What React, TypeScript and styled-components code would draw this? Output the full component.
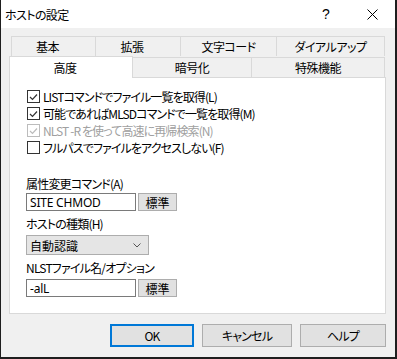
import styled, { createGlobalStyle } from "styled-components";

const GlobalStyle = createGlobalStyle`
  html, body {
    margin: 0;
    padding: 0;
    background: #ffffff;
  }
  * {
    box-sizing: border-box;
  }
  body {
    font-family: "Noto Sans CJK JP", "Noto Sans", sans-serif;
    font-size: 12px;
    font-feature-settings: "palt" 1;
    color: #000;
  }
`;

const Window = styled.div`
  width: 397px;
  height: 359px;
  display: flex;
  flex-direction: column;
  background: #f0f0f0;
  border-left: 1px solid #1e1e1e;
  border-right: 2px solid #1e1e1e;
  border-bottom: 2px solid #1e1e1e;
`;

const TitleBar = styled.div`
  height: 28px;
  flex: none;
  display: flex;
  align-items: center;
  background: #ffffff;
  padding-left: 4px;
`;

const TitleText = styled.div`
  flex: 1;
  font-size: 12px;
  letter-spacing: -0.6px;
`;

const TitleButton = styled.div<{ $w: number }>`
  width: ${(p) => p.$w}px;
  height: 28px;
  display: flex;
  align-items: center;
  justify-content: center;
  font-family: "Liberation Sans", sans-serif;
  font-size: 14px;
`;

const Body = styled.div`
  flex: 1;
  display: flex;
  flex-direction: column;
  padding: 9px 9px 0 8px;
`;

const TabRow = styled.div<{ $indent: number }>`
  display: flex;
  align-items: flex-end;
  padding-left: ${(p) => p.$indent}px;
  height: ${(p) => (p.$indent ? 19 : 21)}px;
`;

const Tab = styled.div<{ $w: number; $shift?: number; $active?: boolean }>`
  width: ${(p) => p.$w}px;
  height: ${(p) => (p.$active ? 22 : 20)}px;
  display: flex;
  align-items: center;
  justify-content: center;
  padding-right: ${(p) => p.$shift || 0}px;
  background: ${(p) => (p.$active ? "#ffffff" : "#f0f0f0")};
  border: 1px solid #d9d9d9;
  border-bottom: none;
  margin-left: -1px;
  position: relative;
  z-index: ${(p) => (p.$active ? 2 : 1)};
  margin-bottom: ${(p) => (p.$active ? -1 : 0)}px;
  letter-spacing: -0.5px;
  &:first-child {
    margin-left: 0;
  }
`;

const Panel = styled.div`
  width: 377px;
  height: 237px;
  background: #ffffff;
  border: 1px solid #d9d9d9;
  display: flex;
  flex-direction: column;
  padding: 10px 0 0 16px;
`;

const CheckRow = styled.label<{ $disabled?: boolean }>`
  height: 17px;
  display: flex;
  align-items: center;
  gap: 3px;
  margin-left: 1px;
  color: ${(p) => (p.$disabled ? "#a0a0a0" : "#000")};
  letter-spacing: -0.9px;
`;

const Box = styled.span<{ $disabled?: boolean }>`
  width: 13px;
  height: 13px;
  flex: none;
  border: 1px solid ${(p) => (p.$disabled ? "#bcbcbc" : "#333333")};
  background: #ffffff;
  display: flex;
  align-items: center;
  justify-content: center;
`;

const FieldLabel = styled.div<{ $top: number }>`
  height: 16px;
  line-height: 16px;
  margin-top: ${(p) => p.$top}px;
  letter-spacing: -0.8px;
`;

const FieldRow = styled.div<{ $top: number }>`
  display: flex;
  gap: 2px;
  margin-top: ${(p) => p.$top}px;
`;

const TextBox = styled.div`
  width: 110px;
  height: 18px;
  border: 1px solid #7a7a7a;
  background: #ffffff;
  padding-left: 3px;
  display: flex;
  align-items: center;
  font-family: "Noto Sans", sans-serif;
  letter-spacing: -0.2px;
`;

const SmallButton = styled.div`
  width: 39px;
  height: 18px;
  border: 1px solid #adadad;
  background: #e1e1e1;
  display: flex;
  align-items: center;
  justify-content: center;
`;

const Combo = styled.div`
  width: 123px;
  height: 20px;
  margin-top: 3px;
  border: 1px solid #adadad;
  background: #e5e5e5;
  display: flex;
  align-items: center;
  justify-content: space-between;
  padding: 0 7px 0 3px;
`;

const ButtonBar = styled.div`
  display: flex;
  justify-content: flex-end;
  gap: 8px;
  margin-top: 10px;
  padding-right: 0;
`;

const DialogButton = styled.div<{ $w: number; $focus?: boolean }>`
  width: ${(p) => p.$w}px;
  height: 23px;
  display: flex;
  align-items: center;
  justify-content: center;
  background: #e1e1e1;
  border: ${(p) => (p.$focus ? "2px solid #0078d7" : "1px solid #adadad")};
  letter-spacing: -0.8px;
`;

function CheckMark({ disabled }: { disabled?: boolean }) {
  return (
    <svg width="9" height="8" viewBox="0 0 9 8">
      <path
        d="M1 4 L3.5 6.5 L8 1.5"
        fill="none"
        stroke={disabled ? "#bcbcbc" : "#333333"}
        strokeWidth="1.2"
      />
    </svg>
  );
}

function Check({
  label,
  checked,
  disabled,
}: {
  label: string;
  checked?: boolean;
  disabled?: boolean;
}) {
  return (
    <CheckRow $disabled={disabled}>
      <Box $disabled={disabled}>{checked && <CheckMark disabled={disabled} />}</Box>
      {label}
    </CheckRow>
  );
}

export default function App() {
  return (
    <>
      <GlobalStyle />
      <Window>
        <TitleBar>
          <TitleText>ホストの設定</TitleText>
          <TitleButton $w={46}>?</TitleButton>
          <TitleButton $w={46}>
            <svg width="11" height="11" viewBox="0 0 11 11">
              <path d="M0.5 0.5 L10.5 10.5 M10.5 0.5 L0.5 10.5" stroke="#000" strokeWidth="1" />
            </svg>
          </TitleButton>
        </TitleBar>
        <Body>
          <TabRow $indent={2}>
            <Tab $w={85} $shift={12}>基本</Tab>
            <Tab $w={86} $shift={12}>拡張</Tab>
            <Tab $w={97}>文字コード</Tab>
            <Tab $w={109}>ダイアルアップ</Tab>
          </TabRow>
          <TabRow $indent={0}>
            <Tab $w={124} $shift={12} $active>
              高度
            </Tab>
            <Tab $w={120}>暗号化</Tab>
            <Tab $w={134}>特殊機能</Tab>
          </TabRow>
          <Panel>
            <Check label="LISTコマンドでファイル一覧を取得(L)" checked />
            <Check label="可能であればMLSDコマンドで一覧を取得(M)" checked />
            <Check label="NLST -R を使って高速に再帰検索(N)" checked disabled />
            <Check label="フルパスでファイルをアクセスしない(F)" />

            <FieldLabel $top={20}>属性変更コマンド(A)</FieldLabel>
            <FieldRow $top={1}>
              <TextBox>SITE CHMOD</TextBox>
              <SmallButton>標準</SmallButton>
            </FieldRow>

            <FieldLabel $top={5}>ホストの種類(H)</FieldLabel>
            <Combo>
              <span>自動認識</span>
              <svg width="8" height="5" viewBox="0 0 8 5">
                <path d="M0.5 0.5 L4 4 L7.5 0.5" fill="none" stroke="#555" strokeWidth="1" />
              </svg>
            </Combo>

            <FieldLabel $top={5}>NLSTファイル名/オプション</FieldLabel>
            <FieldRow $top={3}>
              <TextBox>-alL</TextBox>
              <SmallButton>標準</SmallButton>
            </FieldRow>
          </Panel>
          <ButtonBar>
            <DialogButton $w={84} $focus>
              OK
            </DialogButton>
            <DialogButton $w={90}>キャンセル</DialogButton>
            <DialogButton $w={86}>ヘルプ</DialogButton>
          </ButtonBar>
        </Body>
      </Window>
    </>
  );
}
